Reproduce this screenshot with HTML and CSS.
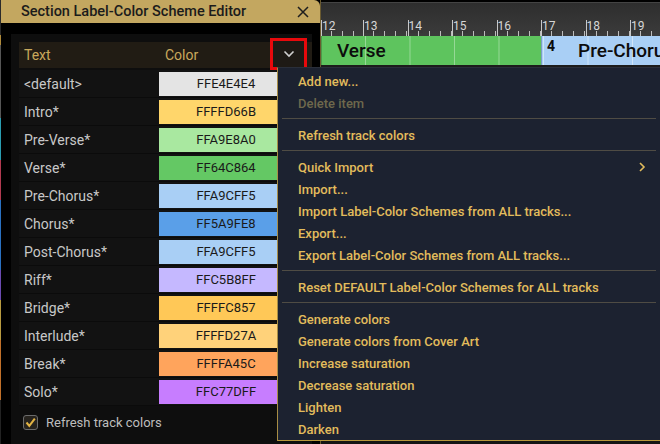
FILE: index.html
```html
<!DOCTYPE html>
<html lang="en">
<head>
    <meta charset="UTF-8">
    <title>Section Label-Color Scheme Editor</title>
    <link rel="stylesheet" href="styles.css">
</head>
<body>

<div class="app">
    <div class="edge-strip"></div>

    <div class="dialog">
        <div class="dialog-title">
            <span>Section Label-Color Scheme Editor</span>
            <svg class="close" width="12" height="12" viewBox="0 0 12 12"><path d="M1 1 L11 11 M11 1 L1 11" stroke="#1e1e1e" stroke-width="1.5"/></svg>
        </div>
        <div class="dialog-body">
            <div class="panel">
                <div class="table-head">
                    <span class="col-text">Text</span>
                    <span class="col-color">Color</span>
                    <span class="menu-button">
                        <svg width="12" height="8" viewBox="0 0 12 8"><path d="M1.5 1.5 L6 6 L10.5 1.5" fill="none" stroke="#d0d0d0" stroke-width="1.6"/></svg>
                    </span>
                </div>

                <div class="row"><span class="label">&lt;default&gt;</span><span class="swatch" style="background:#e4e4e4">FFE4E4E4</span></div>
                <div class="row"><span class="label">Intro*</span><span class="swatch" style="background:#ffd66b">FFFFD66B</span></div>
                <div class="row"><span class="label">Pre-Verse*</span><span class="swatch" style="background:#a9e8a0">FFA9E8A0</span></div>
                <div class="row"><span class="label">Verse*</span><span class="swatch" style="background:#64c864">FF64C864</span></div>
                <div class="row"><span class="label">Pre-Chorus*</span><span class="swatch" style="background:#a9cff5">FFA9CFF5</span></div>
                <div class="row"><span class="label">Chorus*</span><span class="swatch" style="background:#5a9fe8">FF5A9FE8</span></div>
                <div class="row"><span class="label">Post-Chorus*</span><span class="swatch" style="background:#a9cff5">FFA9CFF5</span></div>
                <div class="row"><span class="label">Riff*</span><span class="swatch" style="background:#c5b8ff">FFC5B8FF</span></div>
                <div class="row"><span class="label">Bridge*</span><span class="swatch" style="background:#ffc857">FFFFC857</span></div>
                <div class="row"><span class="label">Interlude*</span><span class="swatch" style="background:#ffd27a">FFFFD27A</span></div>
                <div class="row"><span class="label">Break*</span><span class="swatch" style="background:#ffa45c">FFFFA45C</span></div>
                <div class="row"><span class="label">Solo*</span><span class="swatch" style="background:#c77dff">FFC77DFF</span></div>

                <label class="check-row">
                    <span class="checkbox">
                        <svg width="13" height="13" viewBox="0 0 13 13"><path d="M2.5 6.5 L5.3 9.8 L10.8 2.6" fill="none" stroke="#e3b443" stroke-width="2"/></svg>
                    </span>
                    <span>Refresh track colors</span>
                </label>
            </div>
        </div>
    </div>

    <div class="timeline">
        <div class="ruler">
            <div class="bar first"><span>12</span></div>
            <div class="bar"><span>13</span></div>
            <div class="bar"><span>14</span></div>
            <div class="bar"><span>15</span></div>
            <div class="bar"><span>16</span></div>
            <div class="bar"><span>17</span></div>
            <div class="bar"><span>18</span></div>
            <div class="bar"><span>19</span></div>
        </div>
        <div class="regions">
            <div class="region verse"><span class="region-name">Verse</span></div>
            <div class="region prechorus"><span class="region-num">4</span><span class="region-name">Pre-Chorus</span></div>
        </div>
        <div class="lane"></div>
    </div>
</div>

<div class="context-menu">
    <div class="item">Add new...</div>
    <div class="item disabled">Delete item</div>
    <div class="sep"></div>
    <div class="item">Refresh track colors</div>
    <div class="sep"></div>
    <div class="item submenu">Quick Import
        <svg width="8" height="10" viewBox="0 0 8 10"><path d="M2 1 L6 5 L2 9" fill="none" stroke="#e2bc5c" stroke-width="1.6"/></svg>
    </div>
    <div class="item">Import...</div>
    <div class="item">Import Label-Color Schemes from ALL tracks...</div>
    <div class="item">Export...</div>
    <div class="item">Export Label-Color Schemes from ALL tracks...</div>
    <div class="sep"></div>
    <div class="item">Reset DEFAULT Label-Color Schemes for ALL tracks</div>
    <div class="sep"></div>
    <div class="item">Generate colors</div>
    <div class="item">Generate colors from Cover Art</div>
    <div class="item">Increase saturation</div>
    <div class="item">Decrease saturation</div>
    <div class="item">Lighten</div>
    <div class="item">Darken</div>
</div>

</body>
</html>
```

FILE: styles.css
```css
html, body {
    margin: 0;
    padding: 0;
}
body {
    width: 660px;
    height: 444px;
    overflow: hidden;
    position: relative;
    background-color: #000000;
    font-family: Roboto, "Liberation Sans", sans-serif;
}
.app {
    display: flex;
    height: 444px;
}
.edge-strip {
    width: 1px;
    flex-shrink: 0;
    background: linear-gradient(to bottom,
        #2a2a2a 0 35px, #b08a3a 35px 45px, #555 45px 118px, #2a9cb0 118px 160px,
        #b03a50 160px 200px, #2a70c0 200px 270px, #6a4ab0 270px 300px,
        #b89a40 300px 340px, #c0702a 340px 400px, #222 400px);
}

/* dialog */
.dialog {
    width: 319px;
    flex-shrink: 0;
    display: flex;
    flex-direction: column;
    background-color: #000000;
}
.dialog-title {
    height: 23px;
    background-color: #c3a760;
    border-radius: 0 6px 0 0;
    display: flex;
    align-items: center;
    justify-content: space-between;
    padding: 0 11px 0 20px;
    color: #1b1b1b;
    font-size: 14.5px;
    font-weight: 500;
}
.dialog-body {
    flex-grow: 1;
    padding: 11px 8px 0 10px;
}
.panel {
    height: 100%;
    background-color: #0e0e0e;
    padding: 8px 0 0 8px;
    box-sizing: border-box;
}
.table-head {
    height: 26px;
    margin-bottom: 2px;
    display: flex;
    align-items: center;
    background-color: #211c14;
    color: #c9a95c;
    font-size: 14px;
    position: relative;
}
.col-text {
    width: 141px;
    padding-left: 5px;
}
.col-color {
    flex-grow: 1;
}
.menu-button {
    position: absolute;
    left: 251px;
    top: -4px;
    width: 31px;
    height: 26px;
    border: 3px solid #e8090c;
    background-color: #1e1a15;
    display: flex;
    align-items: center;
    justify-content: center;
}
.row {
    height: 28px;
    display: flex;
    align-items: center;
    background-color: #121212;
    border-bottom: 1px solid #0b0b0b;
    box-sizing: border-box;
}
.row .label {
    width: 135px;
    padding-left: 5px;
    color: #c8c8c8;
    font-size: 14px;
}
.row .swatch {
    width: 134px;
    height: 24px;
    display: flex;
    align-items: center;
    justify-content: center;
    color: #1a1a1a;
    font-size: 13px;
}
.check-row {
    display: flex;
    align-items: center;
    gap: 8px;
    height: 20px;
    margin-top: 6px;
    padding-left: 4px;
    color: #bdbdbd;
    font-size: 13px;
}
.checkbox {
    width: 13px;
    height: 13px;
    border: 1px solid #6b6b6b;
    border-radius: 3px;
    background-color: #26231e;
    display: flex;
    align-items: center;
    justify-content: center;
}

/* timeline */
.timeline {
    flex-grow: 1;
    overflow: hidden;
    border-left: 1px solid #6a5a30;
    display: flex;
    flex-direction: column;
}
.ruler {
    height: 34px;
    margin-top: 2px;
    display: flex;
    background: linear-gradient(to bottom, #2e2e2e, #3b3b3b);
    border-top: 1px solid #444;
    box-sizing: border-box;
}
.bar {
    width: 44.5px;
    flex-shrink: 0;
    position: relative;
    background-image: linear-gradient(to right, #c8c8c8 1px, transparent 1px);
    background-size: 100% 16px;
    background-position: 0 bottom;
    background-repeat: no-repeat;
}
.bar::after {
    content: "";
    position: absolute;
    left: 0;
    right: 0;
    bottom: 0;
    height: 5px;
    background-image: repeating-linear-gradient(to right, transparent 0 10.1px, #bdbdbd 10.1px 11.1px);
}
.bar.first {
    width: 42px;
}
.bar span {
    position: absolute;
    left: 1px;
    top: 17px;
    color: #d6d6d6;
    font-size: 12px;
    background: #373737;
    padding-right: 1px;
    line-height: 13px;
}
.regions {
    height: 29px;
    display: flex;
    border-bottom: 2px solid #1c1c1c;
}
.region {
    display: flex;
    align-items: center;
    flex-shrink: 0;
    white-space: nowrap;
    color: #0c0c0c;
    background-repeat: repeat-x;
    background-size: 44.5px 100%;
    box-sizing: border-box;
}
.region.verse {
    width: 220px;
    background-color: #5ec45e;
    background-image: linear-gradient(to right, rgba(255, 255, 255, 0.35) 1px, transparent 1px);
    background-position: 43px 0;
    border-left: 1px solid #4a9a4a;
    padding-left: 15px;
}
.region.prechorus {
    width: 140px;
    background-color: #a9cff5;
    background-image: linear-gradient(to right, rgba(255, 255, 255, 0.45) 1px, transparent 1px);
    background-position: 45.5px 0;
    border-left: 1px solid #7d9fc0;
    padding-left: 5px;
    align-items: flex-start;
}
.region-name {
    font-size: 19px;
    font-weight: 500;
}
.prechorus .region-name {
    margin-left: 23px;
    margin-top: 3px;
}
.region-num {
    font-size: 14px;
    font-weight: 700;
    margin-top: 2px;
}
.lane {
    flex-grow: 1;
    background-color: #141414;
}

/* context menu */
.context-menu {
    position: absolute;
    left: 277px;
    top: 67px;
    width: 400px;
    height: 374px;
    box-sizing: border-box;
    padding-top: 2px;
    background-color: #1c2230;
    border-left: 1px solid #a88d45;
    border-bottom: 1px solid #b8983c;
    border-top: 1px solid #2a2f3a;
}
.item {
    height: 22px;
    display: flex;
    align-items: center;
    padding-left: 20px;
    color: #e2bc5c;
    font-size: 13px;
    font-weight: 500;
}
.item.disabled {
    color: #6e684c;
}
.item.submenu {
    justify-content: space-between;
    width: 371px;
    box-sizing: border-box;
    padding-right: 3px;
}
.sep {
    height: 1px;
    margin: 4px 0 5px 4px;
    width: 374px;
    background-color: #4f4c44;
}
```
